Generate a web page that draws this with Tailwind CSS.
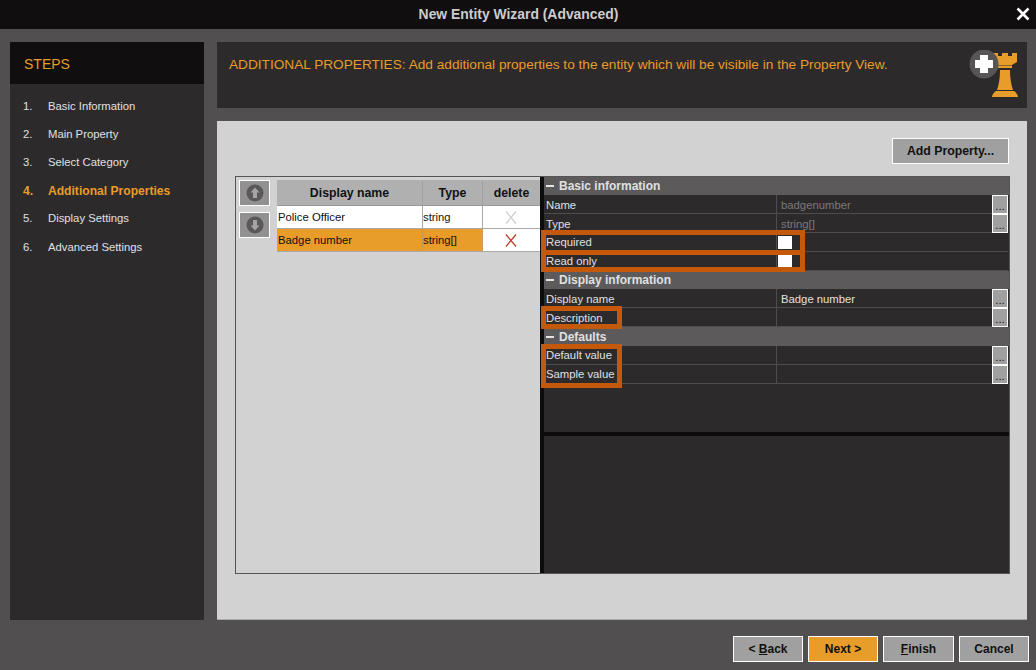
<!DOCTYPE html>
<html lang="en">
<head>
  <meta charset="UTF-8">
  <title>New Entity Wizard (Advanced)</title>
  <script src="https://cdn.jsdelivr.net/npm/@tailwindcss/browser@4"></script>
</head>
<body class="w-[1036px] h-[670px] overflow-hidden bg-[#514f50] font-['Liberation_Sans',Arial,sans-serif] text-[11.3px] text-[#e0e0e0]">

  <!-- title bar -->
  <div class="relative h-[29px] bg-[#110e0f] flex items-center justify-center pl-[1px]">
    <span class="text-[13.9px] font-bold text-[#cccccc]">New Entity Wizard (Advanced)</span>
    <svg class="absolute left-[1016px] top-[7px] w-[14px] h-[14px]" viewBox="0 0 14 14"><path d="M1.500 1.500L12.500 12.500M12.500 1.500L1.500 12.500" stroke="#fff" stroke-width="2.600"/></svg>
  </div>

  <div class="flex gap-[13px] pl-[10px] pt-[13px]">
    <!-- steps -->
    <div class="w-[194px] h-[578px] bg-[#2d2a2b]">
      <div class="h-[42px] bg-[#110e0f] flex items-center pl-[14px] pt-[2px] text-[14px] text-[#e89c2a]">STEPS</div>
      <div class="pt-[8px] pl-[13px] flex flex-col">
        <div class="h-[28.2px] flex items-center"><span class="w-[25px]">1.</span><span>Basic Information</span></div>
        <div class="h-[28.2px] flex items-center"><span class="w-[25px]">2.</span><span>Main Property</span></div>
        <div class="h-[28.2px] flex items-center"><span class="w-[25px]">3.</span><span>Select Category</span></div>
        <div class="h-[28.2px] flex items-center text-[12.1px] font-bold text-[#e89c2a]"><span class="w-[25px]">4.</span><span>Additional Properties</span></div>
        <div class="h-[28.2px] flex items-center"><span class="w-[25px]">5.</span><span>Display Settings</span></div>
        <div class="h-[28.2px] flex items-center"><span class="w-[25px]">6.</span><span>Advanced Settings</span></div>
      </div>
    </div>

    <div class="w-[810px] flex flex-col gap-[13px]">
      <!-- header -->
      <div class="relative h-[66px] bg-[#2d2a2b] pl-[12px] pt-[13px] text-[13.65px] text-[#e89c2a]">
        ADDITIONAL PROPERTIES: Add additional properties to the entity which will be visibile in the Property View.
        <svg class="absolute left-[752px] top-[8px] w-[56px] h-[50px]" viewBox="0 0 56 50">
          <path d="M24 3h5v3h4V3h6v3h4V3h5v9l-5 3H29l-5-3z M29 15.500h14v2.500H29z M31 20h10c0 8 1 14 3 20H28c2-6 3-12 3-20z M27 41h18c2 1 4 4 4 6H23c0-2 2-5 4-6z" fill="#e89c2a"/>
          <circle cx="15" cy="14" r="14.500" fill="#575556"/>
          <path d="M11 5h8v5h5v8h-5v5h-8v-5H6v-8h5z" fill="#fff"/>
        </svg>
      </div>

      <!-- content -->
      <div class="h-[499px] bg-[#d2d2d2] pl-[18px] pr-[17px] pt-[17px] flex flex-col border-b border-[#aaa]">
        <div class="flex justify-end pr-[1px]">
          <button class="w-[117px] h-[26px] pt-[1px] bg-[#a0a0a0] border border-white text-[12.300px] text-[#111] font-bold">Add Property...</button>
        </div>

        <div class="mt-[12px] h-[398px] flex border border-[#555]">
          <!-- property list -->
          <div class="w-[308px] flex items-start gap-[7px] pl-[3px] pt-[3px] border-r-4 border-[#0d0b0c]">
            <div class="flex flex-col gap-[6px]">
              <button class="w-[31px] h-[26px] bg-[#919191] border border-white flex items-center justify-center">
                <svg class="w-[18px] h-[18px]" viewBox="0 0 18 18"><circle cx="9" cy="9" r="8.500" fill="#5a5858"/><path d="M9 3.500L13.500 8.500H11V14H7V8.500H4.500z" fill="#a5a5a5"/></svg>
              </button>
              <button class="w-[31px] h-[26px] bg-[#919191] border border-white flex items-center justify-center">
                <svg class="w-[18px] h-[18px]" viewBox="0 0 18 18"><circle cx="9" cy="9" r="8.500" fill="#5a5858"/><path d="M9 14.500L13.500 9.500H11V4H7V9.500H4.500z" fill="#a5a5a5"/></svg>
              </button>
            </div>
            <div class="w-[263px] text-[#111]">
              <div class="flex h-[26px] pt-[1px] bg-[#b0b0b0] font-bold text-[12.300px] border-b border-[#999] items-center text-center">
                <div class="w-[145px]">Display name</div>
                <div class="w-[61px] h-full flex items-center justify-center border-x border-[#a0a0a0]">Type</div>
                <div class="flex-1">delete</div>
              </div>
              <div class="flex h-[23px] bg-white border-b border-[#aaa] items-center">
                <div class="w-[145px] pl-[1px]">Police Officer</div>
                <div class="w-[61px] h-full flex items-center border-x border-[#aaa]">string</div>
                <div class="flex-1 flex justify-center pr-[2px]">
                  <svg class="w-[12px] h-[13px]" viewBox="0 0 12 13"><path d="M1 .5L11 12.500M11 .5L1 12.500" stroke="#cfcfcf" stroke-width="1.300"/></svg>
                </div>
              </div>
              <div class="flex h-[23px] bg-[#e89c2a] border-b border-[#aaa] items-center">
                <div class="w-[145px] pl-[1px]">Badge number</div>
                <div class="w-[61px] h-full flex items-center border-x border-[#c79a55]">string[]</div>
                <div class="flex-1 h-full bg-white flex items-center justify-center pr-[2px]">
                  <svg class="w-[12px] h-[13px]" viewBox="0 0 12 13"><path d="M1 .5L11 12.500M11 .5L1 12.500" stroke="#b8402a" stroke-width="1.300"/></svg>
                </div>
              </div>
            </div>
          </div>

          <!-- property grid -->
          <div class="relative flex-1 bg-[#2d2a2b] flex flex-col">
            <div class="h-[18px] bg-[#5c5a5b] flex items-center text-[12px] font-bold"><span class="w-[8px] h-[2px] ml-[2px] mr-[5px] bg-[#e4e4e4]"></span>Basic information</div>
            <div class="h-[19px] mr-[1px] flex items-center border-b border-[#4e4c4d]"><div class="w-[233px] h-full flex items-center pl-[2px] pt-[2px] border-r border-[#4e4c4d]">Name</div><div class="flex-1 pl-[4px] pt-[2px] text-[#7b797a]">badgenumber</div><button class="w-[16px] h-[19px] bg-[#a0a0a0] border border-white text-[#111] leading-[20px]">...</button></div>
            <div class="h-[19px] mr-[1px] flex items-center border-b border-[#4e4c4d]"><div class="w-[233px] h-full flex items-center pl-[2px] pt-[2px] border-r border-[#4e4c4d]">Type</div><div class="flex-1 pl-[4px] pt-[2px] text-[#7b797a]">string[]</div><button class="w-[16px] h-[19px] bg-[#a0a0a0] border border-white text-[#111] leading-[20px]">...</button></div>
            <div class="h-[19px] mr-[1px] flex items-center border-b border-[#4e4c4d]"><div class="w-[233px] h-full flex items-center pl-[2px] border-r border-[#4e4c4d]">Required</div><div class="flex-1 pl-[1px]"><div class="w-[14px] h-[13px] bg-white"></div></div></div>
            <div class="h-[19px] mr-[1px] flex items-center border-b border-[#4e4c4d]"><div class="w-[233px] h-full flex items-center pl-[2px] border-r border-[#4e4c4d]">Read only</div><div class="flex-1 pl-[1px]"><div class="w-[14px] h-[13px] bg-white"></div></div></div>
            <div class="h-[18px] bg-[#5c5a5b] flex items-center text-[12px] font-bold"><span class="w-[8px] h-[2px] ml-[2px] mr-[5px] bg-[#e4e4e4]"></span>Display information</div>
            <div class="h-[19px] mr-[1px] flex items-center border-b border-[#4e4c4d]"><div class="w-[233px] h-full flex items-center pl-[2px] pt-[2px] border-r border-[#4e4c4d]">Display name</div><div class="flex-1 pl-[4px] pt-[2px]">Badge number</div><button class="w-[16px] h-[19px] bg-[#a0a0a0] border border-white text-[#111] leading-[20px]">...</button></div>
            <div class="h-[19px] mr-[1px] flex items-center border-b border-[#4e4c4d]"><div class="w-[233px] h-full flex items-center pl-[2px] pt-[2px] border-r border-[#4e4c4d]">Description</div><div class="flex-1"></div><button class="w-[16px] h-[19px] bg-[#a0a0a0] border border-white text-[#111] leading-[20px]">...</button></div>
            <div class="h-[19px] bg-[#5c5a5b] flex items-center text-[12px] font-bold"><span class="w-[8px] h-[2px] ml-[2px] mr-[5px] bg-[#e4e4e4]"></span>Defaults</div>
            <div class="h-[19px] mr-[1px] flex items-center border-b border-[#4e4c4d]"><div class="w-[233px] h-full flex items-center pl-[2px] border-r border-[#4e4c4d]">Default value</div><div class="flex-1"></div><button class="w-[16px] h-[19px] bg-[#a0a0a0] border border-white text-[#111] leading-[20px]">...</button></div>
            <div class="h-[19px] mr-[1px] flex items-center border-b border-[#4e4c4d]"><div class="w-[233px] h-full flex items-center pl-[2px] border-r border-[#4e4c4d]">Sample value</div><div class="flex-1"></div><button class="w-[16px] h-[19px] bg-[#a0a0a0] border border-white text-[#111] leading-[20px]">...</button></div>
            <div class="flex-1"></div>
            <div class="h-[4px] bg-[#0d0b0c] mb-[137px]"></div>

            <!-- highlight boxes drawn over the grid -->
            <div class="absolute left-[-3px] top-[53px] w-[264px] h-[42px] border-[5px] border-[#c4590c]"><div class="mt-[15px] h-[5px] bg-[#c4590c]"></div></div>
            <div class="absolute left-[-3px] top-[129px] w-[81px] h-[23px] border-[5px] border-[#c4590c]"></div>
            <div class="absolute left-[-3px] top-[167px] w-[81px] h-[44px] border-[5px] border-[#c4590c]"></div>
          </div>
        </div>
      </div>
    </div>
  </div>

  <!-- footer buttons -->
  <div class="flex justify-end gap-[5px] pr-[7px] pt-[16px] text-[12px] font-bold text-[#111]">
    <button class="w-[70px] h-[26px] bg-[#a0a0a0] border border-white">&lt; <span class="underline">B</span>ack</button>
    <button class="w-[70px] h-[26px] bg-[#e89c2a] border border-white">Next &gt;</button>
    <button class="w-[71px] h-[26px] bg-[#a0a0a0] border border-white"><span class="underline">F</span>inish</button>
    <button class="w-[70px] h-[26px] bg-[#a0a0a0] border border-white">Cancel</button>
  </div>
</body>
</html>
